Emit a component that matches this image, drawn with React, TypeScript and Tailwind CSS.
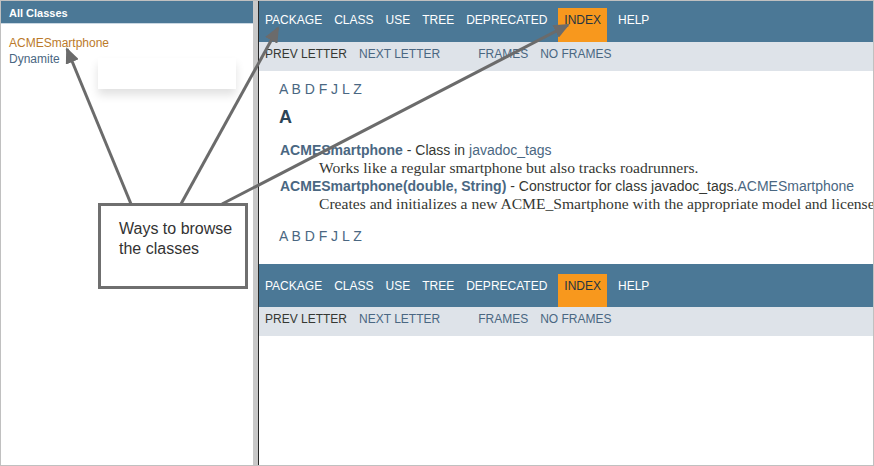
import React from "react";

const NAV = ["PACKAGE", "CLASS", "USE", "TREE", "DEPRECATED", "INDEX", "HELP"];

function TopNav({ pt }: { pt: string }) {
  return (
    <div className={`flex bg-[#4b7896] ${pt}`}>
      {NAV.map((n) =>
        n === "INDEX" ? (
          <span key={n} className="mx-[5px] bg-[#f8981d] px-[6px] py-[5px] leading-[14px] text-[#253441]">
            {n}
          </span>
        ) : (
          <span key={n} className="px-[6px] py-[5px] leading-[14px] text-white">
            {n}
          </span>
        )
      )}
    </div>
  );
}

function SubNav() {
  return (
    <div className="flex h-[29px] bg-[#dee3e9] pt-[5px] leading-[14px]">
      <span className="px-[6px] text-[#353833]">PREV LETTER</span>
      <span className="px-[6px] text-[#4a6782]">NEXT LETTER</span>
      <span className="ml-[26px] px-[6px] text-[#4a6782]">FRAMES</span>
      <span className="px-[6px] text-[#4a6782]">NO FRAMES</span>
    </div>
  );
}

function Letters() {
  return (
    <div className="h-[18px] whitespace-nowrap pl-[20px] text-[14px] leading-[18px] text-[#4a6782]">
      A B D F J L Z
    </div>
  );
}

export default function App() {
  const sans = { fontFamily: '"Liberation Sans", Arial, sans-serif' };
  const serif = { fontFamily: '"Liberation Serif", "Times New Roman", serif' };
  return (
    <div
      className="relative box-border flex h-[466px] w-[874px] overflow-hidden border border-[#c0c0c0] bg-white text-[12px]"
      style={sans}
    >
      {/* Left frame */}
      <div className="relative w-[252px] shrink-0">
        <div className="h-[22px] bg-[#4b7896] pl-[8px] pt-[6px] text-[11px] font-bold leading-[13px] text-white">
          All Classes
        </div>
        <div className="h-px bg-[#c9d7e2]" />
        <div className="pl-[8px] pt-[11px] leading-[16px]">
          <div className="text-[#bb7a2a]">ACMESmartphone</div>
          <div className="text-[#4a6782]">Dynamite</div>
        </div>
        <div className="absolute left-[97px] top-[57px] h-[31px] w-[138px] bg-white shadow-[0_6px_10px_rgba(0,0,0,0.12)]" />
      </div>

      {/* Divider */}
      <div className="w-[5px] shrink-0 bg-[#c8c8c8]" />
      <div className="w-px shrink-0 bg-[#262626]" />

      {/* Right frame */}
      <div className="min-w-0 flex-1 overflow-hidden">
        <TopNav pt="pt-[7px] h-[41px]" />
        <SubNav />
        <div className="pt-[9px]">
          <Letters />
          <div className="mt-[8px] h-[22px] pl-[20px] text-[18px] font-bold leading-[22px] text-[#2c4557]">A</div>
          <div className="mt-[13px] whitespace-nowrap pl-[21px] text-[14px] leading-[18px] text-[#353833]">
            <span className="font-bold text-[#4a6782]">ACMESmartphone</span> - Class in{" "}
            <span className="text-[#4a6782]">javadoc_tags</span>
          </div>
          <div className="whitespace-nowrap pl-[60px] text-[15.6px] leading-[18px] text-[#353833]" style={serif}>
            Works like a regular smartphone but also tracks roadrunners.
          </div>
          <div className="whitespace-nowrap pl-[21px] text-[14px] leading-[18px] text-[#353833]">
            <span className="font-bold text-[#4a6782]">ACMESmartphone(double, String)</span> - Constructor for class
            javadoc_tags.<span className="text-[#4a6782]">ACMESmartphone</span>
          </div>
          <div className="whitespace-nowrap pl-[60px] text-[15.6px] leading-[18px] text-[#353833]" style={serif}>
            Creates and initializes a new ACME_Smartphone with the appropriate model and license number.
          </div>
          <div className="mt-[14px]">
            <Letters />
          </div>
        </div>
        <div className="mt-[19px]">
          <TopNav pt="pt-[10px] h-[43px]" />
        </div>
        <SubNav />
      </div>

      {/* Annotation box */}
      <div className="absolute left-[97px] top-[202px] h-[86px] w-[150px] border-[3px] border-[#6f6f6f] bg-white pl-[18px] pt-[13px] text-[16px] leading-[20px] text-[#333333]">
        Ways to browse
        <br />
        the classes
      </div>

      {/* Arrows */}
      <svg className="pointer-events-none absolute left-0 top-0" width="874" height="466" viewBox="0 0 874 466">
        <defs>
          <marker id="ah" markerUnits="userSpaceOnUse" markerWidth="16" markerHeight="14" refX="14" refY="7" orient="auto">
            <path d="M0,0 L16,7 L0,14 Z" fill="#6b6b6b" />
          </marker>
        </defs>
        <line x1="130" y1="203" x2="66" y2="48" stroke="#6b6b6b" strokeWidth="3" markerEnd="url(#ah)" />
        <line x1="180" y1="203" x2="277" y2="27" stroke="#6b6b6b" strokeWidth="3" markerEnd="url(#ah)" />
        <line x1="221" y1="203" x2="567" y2="24" stroke="#6b6b6b" strokeWidth="3" markerEnd="url(#ah)" />
      </svg>
    </div>
  );
}
